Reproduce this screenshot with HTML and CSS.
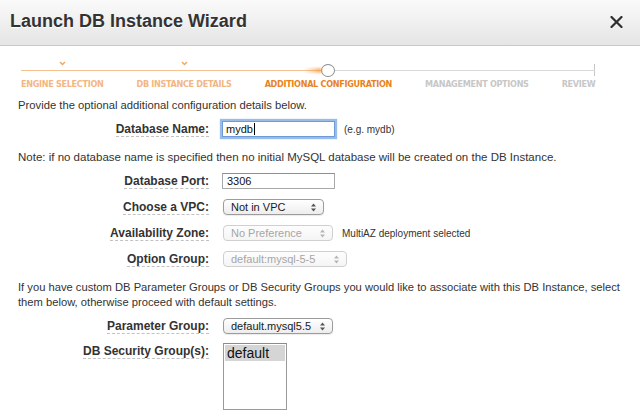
FILE: index.html
```html
<!DOCTYPE html>
<html lang="en">
<head>
<meta charset="utf-8">
<title>Launch DB Instance Wizard</title>
<link rel="stylesheet" href="styles.css">
</head>
<body>
<div class="wizard">
  <header class="wizard-head">
    <h1 class="wizard-title">Launch DB Instance Wizard</h1>
    <button class="close" type="button" aria-label="Close">
      <svg width="13" height="12" viewBox="0 0 13 12"><path d="M1.5 1 L11.5 11 M11.5 1 L1.5 11" stroke="#2e2e2e" stroke-width="2.2" stroke-linecap="round"/></svg>
    </button>
  </header>

  <ol class="steps">
    <li class="step done">
      <div class="mark"><svg class="check" width="7" height="5" viewBox="0 0 7 5"><polyline points="1,1 3.5,3.6 6,1" fill="none" stroke="#f0a65c" stroke-width="1.4"/></svg></div>
      <span class="step-name">ENGINE SELECTION</span>
    </li>
    <li class="step done">
      <div class="mark"><svg class="check" width="7" height="5" viewBox="0 0 7 5"><polyline points="1,1 3.5,3.6 6,1" fill="none" stroke="#f0a65c" stroke-width="1.4"/></svg></div>
      <span class="step-name">DB INSTANCE DETAILS</span>
    </li>
    <li class="step active">
      <div class="mark"><span class="dot"></span></div>
      <span class="step-name">ADDITIONAL CONFIGURATION</span>
    </li>
    <li class="step todo">
      <div class="mark"></div>
      <span class="step-name">MANAGEMENT OPTIONS</span>
    </li>
    <li class="step todo last">
      <div class="mark"></div>
      <span class="step-name">REVIEW</span>
    </li>
  </ol>

  <main class="content">
    <p class="intro">Provide the optional additional configuration details below.</p>

    <div class="row">
      <div class="label-cell"><span class="label">Database Name:</span></div>
      <span class="field focused">mydb<span class="caret"></span></span>
      <span class="hint">(e.g. mydb)</span>
    </div>

    <p class="note">Note: if no database name is specified then no initial MySQL database will be created on the DB Instance.</p>

    <div class="row">
      <div class="label-cell"><span class="label">Database Port:</span></div>
      <span class="field">3306</span>
    </div>

    <div class="row">
      <div class="label-cell"><span class="label">Choose a VPC:</span></div>
      <span class="popup w-vpc">Not in VPC<svg class="arrows" width="5" height="9" viewBox="0 0 5 9"><path d="M0 3.6 L2.5 0.6 L5 3.6 Z M0 5.4 L2.5 8.4 L5 5.4 Z" fill="#555"/></svg></span>
    </div>

    <div class="row">
      <div class="label-cell"><span class="label">Availability Zone:</span></div>
      <span class="popup disabled w-az">No Preference<svg class="arrows" width="5" height="9" viewBox="0 0 5 9"><path d="M0 3.6 L2.5 0.6 L5 3.6 Z M0 5.4 L2.5 8.4 L5 5.4 Z" fill="#b5b5b5"/></svg></span>
      <span class="aside">MultiAZ deployment selected</span>
    </div>

    <div class="row">
      <div class="label-cell"><span class="label">Option Group:</span></div>
      <span class="popup disabled w-og">default:mysql-5-5<svg class="arrows" width="5" height="9" viewBox="0 0 5 9"><path d="M0 3.6 L2.5 0.6 L5 3.6 Z M0 5.4 L2.5 8.4 L5 5.4 Z" fill="#b5b5b5"/></svg></span>
    </div>

    <p class="groups-text">If you have custom DB Parameter Groups or DB Security Groups you would like to associate with this DB Instance, select them below, otherwise proceed with default settings.</p>

    <div class="row">
      <div class="label-cell"><span class="label">Parameter Group:</span></div>
      <span class="popup w-pg">default.mysql5.5<svg class="arrows" width="5" height="9" viewBox="0 0 5 9"><path d="M0 3.6 L2.5 0.6 L5 3.6 Z M0 5.4 L2.5 8.4 L5 5.4 Z" fill="#555"/></svg></span>
    </div>

    <div class="row top">
      <div class="label-cell"><span class="label">DB Security Group(s):</span></div>
      <div class="listbox">
        <div class="option selected">default</div>
      </div>
    </div>
  </main>
</div>
</body>
</html>
```

FILE: styles.css
```css
* { box-sizing: border-box; }

html, body {
  margin: 0;
  padding: 0;
  background: #fff;
}

body {
  width: 640px;
  height: 415px;
  overflow: hidden;
  font-family: "Liberation Sans", Arial, sans-serif;
  font-size: 11px;
  color: #333;
}

/* ---------- title bar ---------- */
.wizard-head {
  height: 46px;
  display: flex;
  align-items: flex-start;
  justify-content: space-between;
  padding: 10px 17px 0 10px;
  background: linear-gradient(#fafafa, #e5e5e5);
  border-bottom: 1px solid #c9c9c9;
}

.wizard-title {
  margin: 0;
  font-size: 18px;
  line-height: 22px;
  font-weight: bold;
  color: #333;
  text-shadow: 0 1px 0 #fff;
}

.close {
  margin: 6px 0 0;
  padding: 0;
  border: 0;
  background: none;
  width: 13px;
  height: 12px;
  display: flex;
}

/* ---------- step tracker ---------- */
.steps {
  list-style: none;
  margin: 10px 0 0 21px;
  padding: 0;
  display: flex;
  gap: 33px;
}

.step {
  display: flex;
  flex-direction: column;
  align-items: center;
}

.mark {
  position: relative;
  align-self: stretch;
  height: 22px;
  display: flex;
  justify-content: center;
  align-items: flex-start;
}

/* connector running to the next step */
.mark::after {
  content: "";
  position: absolute;
  left: 0;
  right: -33px;
  top: 14px;
  height: 1px;
  background: #f6c292;
}

.step.todo .mark::after { background: #d9d9d9; }
.step.last .mark::after { right: 0; }

/* end tick */
.step.last .mark::before {
  content: "";
  position: absolute;
  right: 0;
  top: 8px;
  width: 1px;
  height: 12px;
  background: #c4c4c4;
}

.step.active .mark::before {
  content: "";
  position: absolute;
  left: 0;
  right: 50%;
  top: 14px;
  height: 1px;
  background: #f6c292;
}
.step.active .mark::after {
  left: 50%;
  background: #d9d9d9;
}

.check {
  margin-top: 5px;
  display: block;
}

.dot {
  position: relative;
  z-index: 1;
  margin-top: 8px;
  width: 14px;
  height: 13px;
  border-radius: 50%;
  border: 1.5px solid #8d8d8d;
  background: #fff;
}

/* soft trail behind the current step marker */
.dot::before {
  content: "";
  position: absolute;
  right: 100%;
  top: 3px;
  width: 18px;
  height: 5px;
  border-radius: 3px;
  background: linear-gradient(to right, rgba(244, 160, 80, 0), rgba(244, 150, 60, 0.75));
  filter: blur(1px);
}

.step-name {
  display: block;
  font-family: "DejaVu Sans Condensed", "Liberation Sans", sans-serif;
  font-weight: bold;
  font-size: 9px;
  letter-spacing: -0.3px;
  line-height: 12px;
  white-space: nowrap;
}

.step.done .step-name { color: #f3b683; }
.step.active .step-name { color: #e8831c; }
.step.todo .step-name { color: #c7c7c7; }

/* ---------- form body ---------- */
.content {
  padding: 0 0 0 18px;
}

.intro,
.note,
.groups-text {
  margin: 0;
  font-size: 11px;
  line-height: 15px;
  color: #333;
}

.intro { margin-top: 8px; font-size: 11.25px; }
.note { margin-top: 8px; font-size: 11.5px; }
.groups-text { margin-top: 8px; width: 616px; font-size: 11.2px; }

.row {
  display: flex;
  align-items: center;
  height: 26px;
}

.intro + .row { margin-top: 3px; }
.note + .row { margin-top: 3px; }
.groups-text + .row { margin-top: 3px; }

.row.top {
  align-items: flex-start;
  height: auto;
  margin-top: 4px;
}

.label-cell {
  flex: none;
  width: 191px;
  margin-right: 13px;
  text-align: right;
}

.row.top .label-cell { padding-top: 1px; }

.label {
  display: inline-block;
  font-size: 12px;
  line-height: 14px;
  font-weight: bold;
  color: #333;
  border-bottom: 1px dashed #c2c2c2;
}

/* text inputs */
.field {
  display: inline-flex;
  align-items: center;
  width: 113px;
  height: 16px;
  padding: 0 4px;
  border: 1px solid #a8a8a8;
  border-top-color: #8f8f8f;
  background: #fff;
  font-size: 11px;
  color: #111;
}

.field.focused {
  border-color: #6e9ad6;
  box-shadow: 0 0 1px 2px rgba(120, 165, 225, 0.75);
  padding-left: 3px;
}

.caret {
  display: inline-block;
  width: 1px;
  height: 12px;
  margin-left: 1px;
  background: #000;
}

.hint {
  margin-left: 9px;
  font-size: 10px;
  color: #333;
}

/* pop-up menus */
.popup {
  display: inline-flex;
  align-items: center;
  justify-content: space-between;
  height: 16px;
  margin-left: 1px;
  padding: 0 7px 0 7px;
  border: 1px solid #9c9c9c;
  border-radius: 4px;
  background: linear-gradient(#ffffff, #ededed);
  box-shadow: 0 1px 1px rgba(0, 0, 0, 0.08);
  font-size: 11px;
  color: #1a1a1a;
  white-space: nowrap;
}

.popup.disabled {
  border-color: #d0d0d0;
  background: linear-gradient(#fdfdfd, #f5f5f5);
  box-shadow: none;
  color: #a6a6a6;
}

.arrows { flex: none; display: block; }

.w-vpc { width: 101px; }
.w-az { width: 110px; }
.w-og { width: 124px; }
.w-pg { width: 110px; }

.aside {
  margin-left: 9px;
  font-size: 10px;
  color: #333;
}

/* list box */
.listbox {
  margin-left: 1px;
  width: 64px;
  height: 67px;
  padding: 1px;
  border: 1px solid #9a9a9a;
  border-top-color: #8a8a8a;
  background: #fff;
}

.option {
  font-size: 14px;
  line-height: 16px;
  padding-left: 2px;
  color: #111;
}

.option.selected { background: #d5d5d5; }
```
